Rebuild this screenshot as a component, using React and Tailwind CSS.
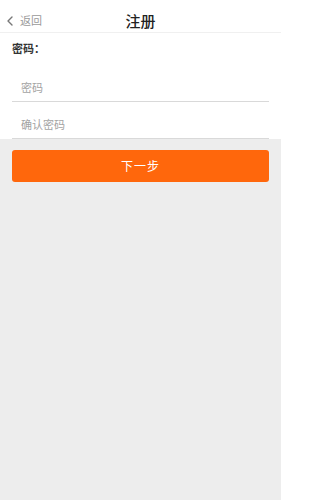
const BackIcon = () => (
  <svg width="6" height="10" viewBox="0 0 6 10" fill="none" aria-hidden="true">
    <path d="M5 1 1 5l4 4" stroke="#777" strokeWidth="1.4" strokeLinecap="round" strokeLinejoin="round" />
  </svg>
);

const Field = ({ placeholder }) => (
  <div className="h-[37px] flex items-end border-b border-[#d9d9d9] pb-[7px]">
    <input
      type="password"
      placeholder={placeholder}
      className="w-full pl-[9px] text-[11px] leading-[14px] text-[#333] placeholder:text-[#a3a3a3] outline-none bg-transparent"
    />
  </div>
);

export default function App() {
  return (
    <div
      className="w-[281px] h-[500px] bg-[#ededed] flex flex-col"
      style={{ fontFamily: '"Noto Sans CJK SC", "Noto Sans", sans-serif' }}
    >
      <header className="relative h-[33px] bg-white border-b border-[#f0f0f0] flex items-center pt-[9px]">
        <button className="flex items-center gap-[7px] pl-[7px] text-[11px] text-[#9a9a9a]">
          <BackIcon />
          <span>返回</span>
        </button>
        <h1 className="absolute left-0 right-0 text-center top-[11px] text-[15px] leading-[20px] font-medium text-[#222] pointer-events-none">
          注册
        </h1>
      </header>

      <section className="bg-white px-3">
        <p className="pt-[8px] text-[11px] leading-[14px] font-bold text-[#333]">密码：</p>
        <div className="mt-[10px]">
          <Field placeholder="密码" />
          <Field placeholder="确认密码" />
        </div>
      </section>

      <div className="px-3 pt-[11px]">
        <button className="w-full h-[32px] rounded-[3px] bg-[#ff670c] text-white text-[12px] tracking-[1px]">
          下一步
        </button>
      </div>
    </div>
  );
}
